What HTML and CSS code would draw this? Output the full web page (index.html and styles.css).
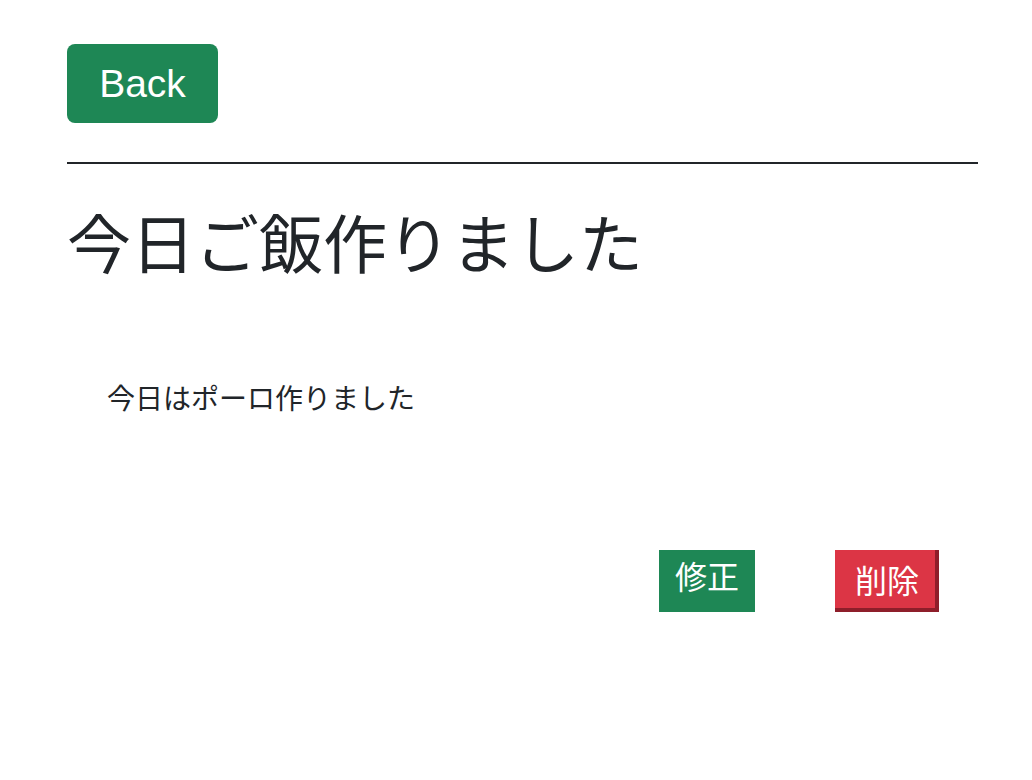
FILE: index.html
```html
<!DOCTYPE html>
<html lang="ja">
<head>
<meta charset="utf-8">
<title>Post</title>
<link rel="stylesheet" href="styles.css">
</head>
<body>
<div class="page">
  <a class="btn-back" href="#">Back</a>
  <hr class="divider">
  <h1 class="title">今日ご飯作りました</h1>
  <p class="body-text">今日はポーロ作りました</p>
  <div class="actions">
    <a class="btn-edit" href="#">修正</a>
    <button class="btn-delete" type="button">削除</button>
  </div>
</div>
</body>
</html>
```

FILE: styles.css
```css
html, body {
  margin: 0;
  padding: 0;
  background: #ffffff;
}

body {
  font-family: "Noto Sans CJK JP", "Noto Sans", sans-serif;
  color: #212529;
}

.page {
  padding: 44px 54px 0 67px;
  display: flex;
  flex-direction: column;
  align-items: flex-start;
}

.btn-back {
  display: flex;
  align-items: center;
  justify-content: center;
  width: 151px;
  height: 79px;
  box-sizing: border-box;
  background: #1e8755;
  color: #ffffff;
  border-radius: 8px;
  text-decoration: none;
  font-family: "Liberation Sans", Arial, sans-serif;
  font-size: 39px;
  line-height: 1;
}

.divider {
  align-self: stretch;
  margin: 39px 0 0 0;
  border: 0;
  height: 2px;
  background: #212529;
}

.title {
  margin: 38px 0 0 0;
  font-size: 64px;
  font-weight: 400;
  line-height: 1.2;
}

.body-text {
  margin: 97px 0 0 40px;
  font-size: 28px;
  line-height: 42px;
}

.actions {
  align-self: stretch;
  display: flex;
  justify-content: flex-end;
  align-items: flex-start;
  gap: 80px;
  padding-right: 39px;
  margin-top: 132.5px;
}

.btn-edit {
  display: block;
  box-sizing: border-box;
  width: 96px;
  height: 62px;
  padding-top: 9px;
  background: #1e8755;
  color: #ffffff;
  text-decoration: none;
  text-align: center;
  font-size: 32px;
  line-height: 1;
}

.btn-delete {
  display: block;
  box-sizing: border-box;
  width: 104px;
  height: 62px;
  margin: 0;
  padding: 0 0 0 4px;
  border: 0;
  border-right: 4px solid #8e1e2a;
  border-bottom: 4px solid #8e1e2a;
  background: #dc3545;
  color: #ffffff;
  font-family: "Noto Sans CJK JP", "Noto Sans", sans-serif;
  font-size: 32px;
  line-height: 1;
  text-align: center;
}
```
